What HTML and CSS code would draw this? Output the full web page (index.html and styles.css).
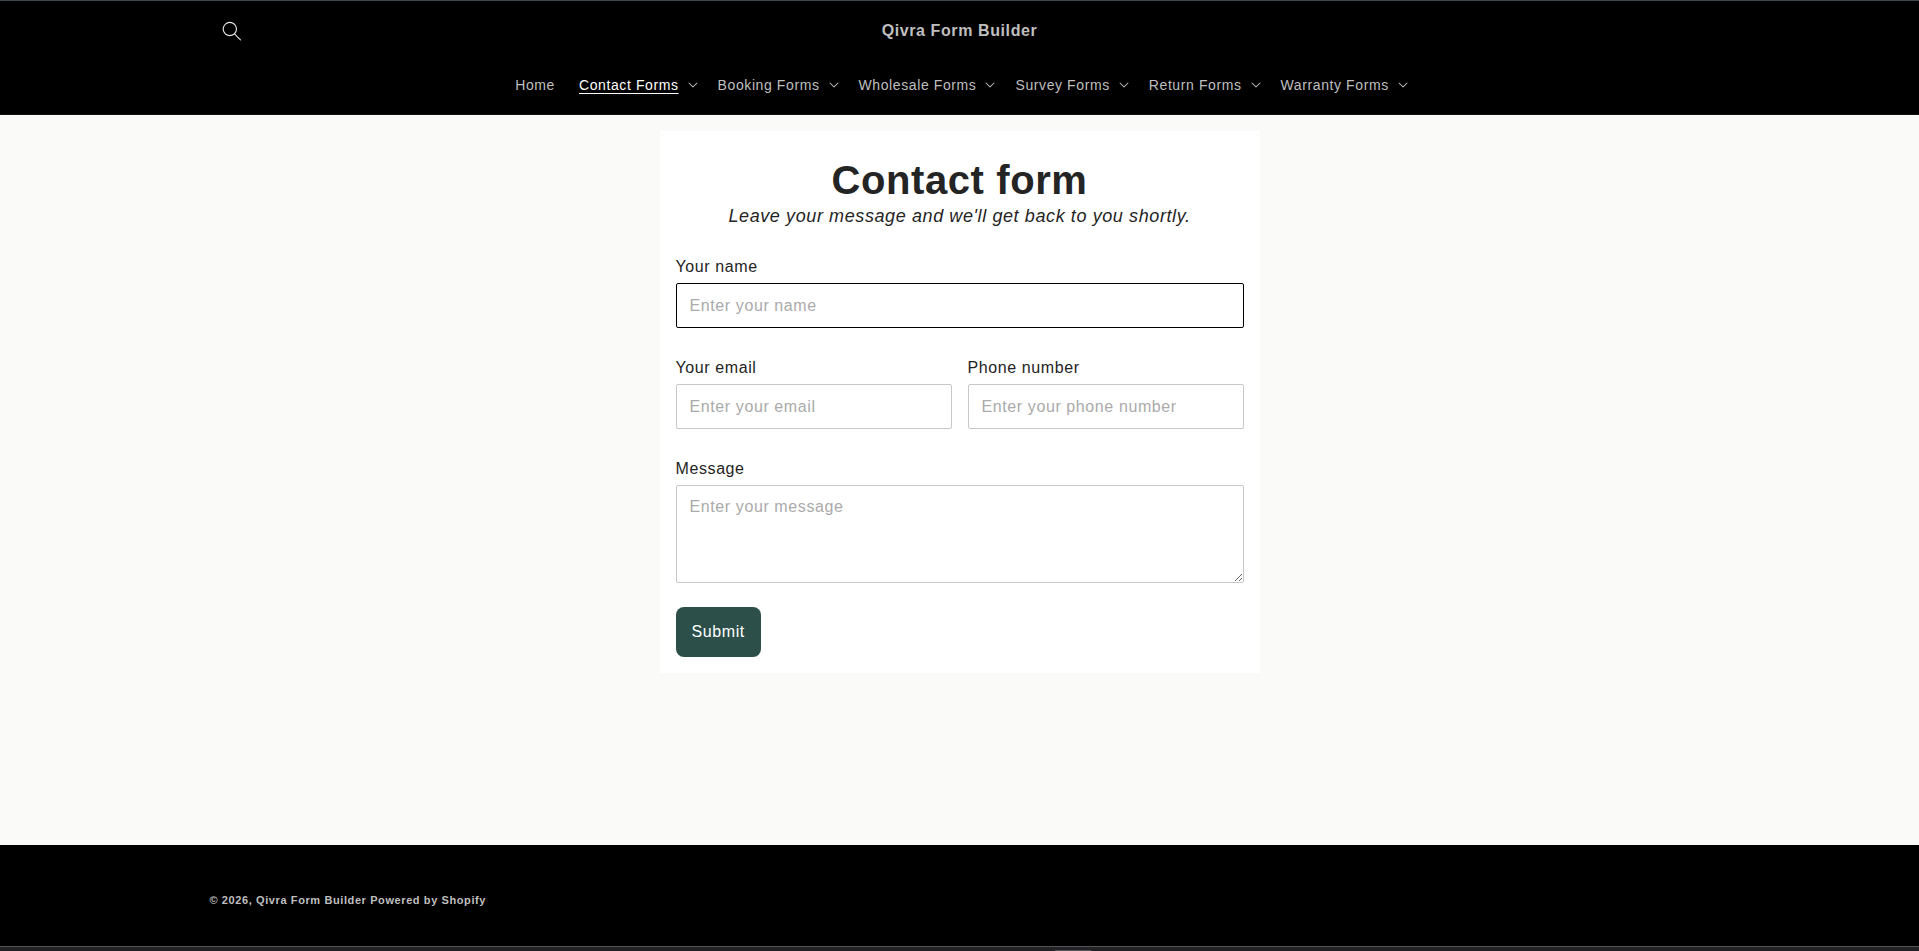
FILE: index.html
```html
<!DOCTYPE html>
<html lang="en">
<head>
<meta charset="utf-8">
<title>Contact form – Qivra Form Builder</title>
<link rel="stylesheet" href="styles.css">
</head>
<body>
<svg class="sprite" aria-hidden="true">
  <symbol id="caret" viewBox="0 0 10 6">
    <path fill-rule="evenodd" clip-rule="evenodd" fill="currentColor" d="M9.354.646a.5.5 0 0 0-.708 0L5 4.293 1.354.646a.5.5 0 0 0-.708.708l4 4a.5.5 0 0 0 .708 0l4-4a.5.5 0 0 0 0-.708"/>
  </symbol>
</svg>
<header class="header">
  <div class="header-top page-width">
    <button class="search" type="button" aria-label="Search">
      <svg class="search-icon" viewBox="0 0 18 19" aria-hidden="true"><path fill="currentColor" fill-rule="evenodd" clip-rule="evenodd" d="M11.03 11.68A5.784 5.784 0 1 1 2.85 3.5a5.784 5.784 0 0 1 8.18 8.18m.26 1.12a6.78 6.78 0 1 1 .72-.7l5.4 5.4a.5.5 0 1 1-.71.7z"/></svg>
    </button>
    <a class="brand" href="#">Qivra Form Builder</a>
  </div>
  <nav class="nav" aria-label="Main">
    <a class="nav-item nav-plain" href="#"><span>Home</span></a>
    <a class="nav-item active" href="#" aria-current="page"><span>Contact Forms</span><svg class="caret"><use href="#caret"/></svg></a>
    <a class="nav-item" href="#"><span>Booking Forms</span><svg class="caret"><use href="#caret"/></svg></a>
    <a class="nav-item" href="#"><span>Wholesale Forms</span><svg class="caret"><use href="#caret"/></svg></a>
    <a class="nav-item" href="#"><span>Survey Forms</span><svg class="caret"><use href="#caret"/></svg></a>
    <a class="nav-item" href="#"><span>Return Forms</span><svg class="caret"><use href="#caret"/></svg></a>
    <a class="nav-item" href="#"><span>Warranty Forms</span><svg class="caret"><use href="#caret"/></svg></a>
  </nav>
</header>
<main class="main">
  <form class="card">
    <div class="intro">
      <h1 class="title">Contact form</h1>
      <p class="subtitle">Leave your message and we'll get back to you shortly.</p>
    </div>
    <div class="field">
      <label for="name">Your name</label>
      <input class="control emphasized" id="name" type="text" placeholder="Enter your name">
    </div>
    <div class="row">
      <div class="field">
        <label for="email">Your email</label>
        <input class="control" id="email" type="email" placeholder="Enter your email">
      </div>
      <div class="field">
        <label for="phone">Phone number</label>
        <input class="control" id="phone" type="tel" placeholder="Enter your phone number">
      </div>
    </div>
    <div class="field">
      <label for="message">Message</label>
      <textarea class="control" id="message" rows="4" placeholder="Enter your message"></textarea>
    </div>
    <button class="submit" type="submit">Submit</button>
  </form>
</main>
<footer class="footer">
  <div class="page-width">
    <small class="copyright">© 2026, <a href="#">Qivra Form Builder</a> <a href="#">Powered by Shopify</a></small>
  </div>
</footer>
<div class="dock"><span class="dock-handle"></span></div>
</body>
</html>
```

FILE: styles.css
```css
*, *::before, *::after { box-sizing: border-box; }

html { font-size: 62.5%; }

body {
  margin: 0;
  min-height: 100vh;
  display: flex;
  flex-direction: column;
  background: #fafaf8;
  color: #242424;
  font-family: "Liberation Sans", Arial, sans-serif;
  font-size: 16px;
  letter-spacing: 0.06rem;
}

a { color: inherit; text-decoration: none; }

.sprite { display: none; }

.page-width {
  width: 100%;
  max-width: 1600px;
  margin: 0 auto;
  padding: 0 50px;
}

.header {
  background: #000;
  color: #bfbfbf;
  border-top: 1px solid #3b484b;
  border-bottom: 1px solid #141414;
}

.header-top {
  display: grid;
  grid-template-columns: 1fr auto 1fr;
  align-items: center;
  padding-top: 8px;
}

.search {
  display: flex;
  align-items: center;
  justify-content: center;
  width: 44px;
  height: 44px;
  padding: 0;
  border: 0;
  background: none;
  color: #e6e6e6;
}

.search-icon { width: 20px; height: 20px; }

.brand { font-weight: 700; line-height: 24px; }

.nav {
  display: flex;
  flex-wrap: wrap;
  justify-content: center;
  padding: 10px 0 7px;
  font-size: 14px;
}

.nav-item {
  display: flex;
  align-items: center;
  gap: 9px;
  padding: 12px 8px 12px 12px;
  line-height: 20px;
}

.nav-plain { padding-right: 12px; }

.active { color: #fff; }

.active span {
  text-decoration: underline;
  text-decoration-thickness: 1px;
  text-underline-offset: 3px;
}

.caret { width: 10px; height: 6px; color: #bfbfbf; }

.main { flex: 1; padding: 16px; }

.card {
  display: flex;
  flex-direction: column;
  width: 100%;
  max-width: 600px;
  margin: 0 auto;
  padding: 24px 16px 16px;
  background: #fff;
}

.intro { margin-bottom: 24px; text-align: center; }

.title { margin: 0; font-size: 40px; line-height: 50px; }

.subtitle {
  margin: 0;
  font-size: 18px;
  font-style: italic;
  line-height: 22px;
}

.field {
  display: flex;
  flex-direction: column;
  gap: 4px;
  padding-bottom: 24px;
}

.field label { padding-top: 4px; line-height: 24px; }

.row {
  display: grid;
  grid-template-columns: 1fr 1fr;
  gap: 16px;
}

.control {
  width: 100%;
  min-height: 45px;
  padding: 11px 13px;
  border: 1px solid #c8c8c8;
  border-radius: 2px;
  background: #fff;
  color: #242424;
  font: inherit;
  line-height: 20px;
  letter-spacing: inherit;
}

textarea.control {
  display: block;
  height: 98px;
  resize: vertical;
}

.control::placeholder { color: #aaa; }

.emphasized { border-color: #000; }

.submit {
  align-self: flex-start;
  padding: 13px 16px;
  border: 0;
  border-radius: 8px;
  background: #2d4f4a;
  color: #fff;
  font: inherit;
  line-height: 24px;
  letter-spacing: inherit;
}

.footer {
  padding: 47px 0 37px;
  background: #000;
  color: #bfbfbf;
}

.copyright {
  display: block;
  font-size: 11px;
  font-weight: 700;
  line-height: 17px;
}

.dock {
  display: flex;
  align-items: flex-end;
  height: 5px;
  padding-left: 55%;
  border-top: 1px solid #555;
  background: #222226;
}

.dock-handle {
  width: 36px;
  height: 1px;
  background: #555;
}
```
